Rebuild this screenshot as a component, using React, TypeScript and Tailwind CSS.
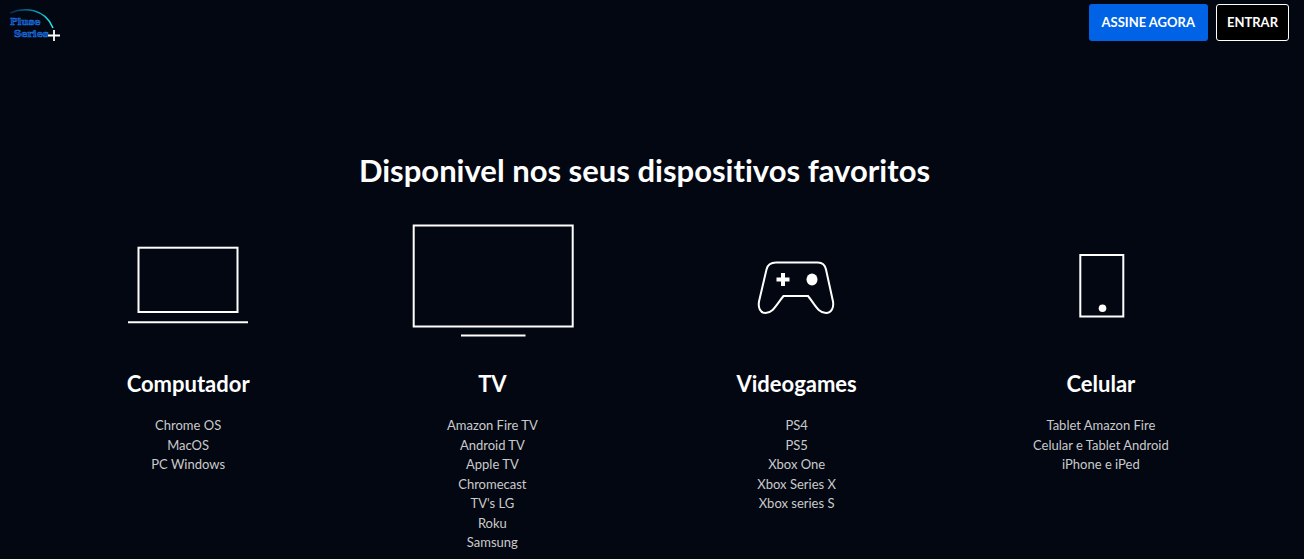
import type { ReactNode } from "react";

type Device = { title: string; icon: ReactNode; items: string[] };

const devices: Device[] = [
  {
    title: "Computador",
    items: ["Chrome OS", "MacOS", "PC Windows"],
    icon: (
      <>
        <rect x="40.5" y="23.7" width="99" height="64.3" />
        <path d="M30 98.2h120" />
      </>
    ),
  },
  {
    title: "TV",
    items: ["Amazon Fire TV", "Android TV", "Apple TV", "Chromecast", "TV's LG", "Roku", "Samsung"],
    icon: (
      <>
        <rect x="11.7" y="1.5" width="159" height="101" />
        <path d="M59 111.5h64.5" />
      </>
    ),
  },
  {
    title: "Videogames",
    items: ["PS4", "PS5", "Xbox One", "Xbox Series X", "Xbox series S"],
    icon: (
      <>
        <path d="M69 38.500h42c4.500 0 7 2.500 8 7l7 32c1 6-1.500 11.500-7 11.500c-8 0-11-8.500-18-17h-24.500c-7 8.500-10.500 17-18 17c-5.500 0-7.500-5.500-6.500-11.500l7.500-32c1-4.500 4-7 9.500-7z" />
        <path d="M69.5 55.500h13M76 49v13" strokeWidth="4" />
        <ellipse cx="105" cy="55.500" rx="5.500" ry="6" fill="white" stroke="none" />
      </>
    ),
  },
  {
    title: "Celular",
    items: ["Tablet Amazon Fire", "Celular e Tablet Android", "iPhone e iPed"],
    icon: (
      <>
        <rect x="69.3" y="31" width="43" height="61.5" />
        <circle cx="91.5" cy="84.3" r="3.8" fill="white" stroke="none" />
      </>
    ),
  },
];

function Logo() {
  return (
    <svg className="h-9 w-14" viewBox="0 0 56 36" role="img" aria-label="Pluse Series+">
      <defs>
        <linearGradient id="arc" x1="0" x2="1">
          <stop offset="0" stopColor="#06264f" />
          <stop offset="0.6" stopColor="#078fb5" />
          <stop offset="1" stopColor="#25f4f4" />
        </linearGradient>
      </defs>
      <path d="M2 5C16 -1 37 0 45 20" fill="none" stroke="url(#arc)" strokeWidth="1.5" />
      <g fill="#1a2fa0" stroke="#1478dc" strokeWidth="0.6" fontFamily="DejaVu Serif, serif" fontWeight="700" fontSize="10">
        <text x="2" y="17">Pluse</text>
        <text x="6" y="29">Series</text>
      </g>
      <path d="M40 27.5h12M46 22v11" stroke="white" strokeWidth="1.8" />
    </svg>
  );
}

export default function App() {
  return (
    <div className="min-h-screen bg-[#030712] pr-[15px] font-['Lato',sans-serif] text-white">
      <header className="flex items-start justify-between pt-1 pl-2">
        <a href="#" className="mt-1">
          <Logo />
        </a>
        <nav className="flex gap-2 text-[13px] font-bold">
          <button className="h-[37px] rounded-[3px] bg-[#0063e5] px-[13px]">ASSINE AGORA</button>
          <button className="h-[37px] rounded-[3px] border border-white bg-black px-[10px]">ENTRAR</button>
        </nav>
      </header>
      <main className="px-9 pt-[102px]">
        <h1 className="text-center text-[31px] leading-12 font-bold [font-variant-ligatures:none]">
          Disponivel nos seus dispositivos favoritos
        </h1>
        <section className="mt-[30px] grid grid-cols-4">
          {devices.map((d) => (
            <article key={d.title} className="flex flex-col items-center text-center">
              <svg className="h-[120px] w-[180px]" viewBox="0 0 180 120" fill="none" stroke="white" strokeWidth="2" aria-hidden="true">
                {d.icon}
              </svg>
              <h2 className="mt-6 text-[22px] leading-8 font-bold">{d.title}</h2>
              <ul className="mt-4 text-[13px] leading-normal text-[#cacaca]">
                {d.items.map((item) => (
                  <li key={item}>{item}</li>
                ))}
              </ul>
            </article>
          ))}
        </section>
      </main>
    </div>
  );
}
